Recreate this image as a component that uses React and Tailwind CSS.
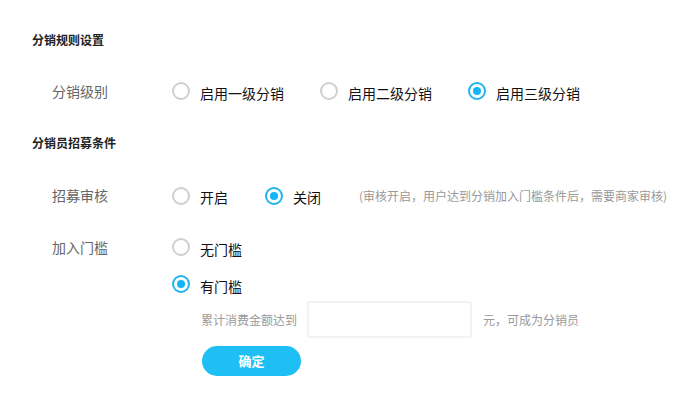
import { useState } from "react";

const levelOptions = ["启用一级分销", "启用二级分销", "启用三级分销"];

function Radio({ checked, label, onClick }) {
  return (
    <button type="button" className="flex h-[28px] items-center" onClick={onClick}>
      <span
        className={`flex h-[18px] w-[18px] items-center justify-center rounded-full border-2 ${
          checked ? "border-[#22b4f0]" : "border-[#cfcfcf]"
        }`}
      >
        {checked && <span className="h-[8px] w-[8px] rounded-full bg-[#13b5f4]" />}
      </span>
      <span className="ml-[10px] pt-[3px] text-[14px] leading-[20px] text-[#111]">{label}</span>
    </button>
  );
}

function Row({ label, children, className = "" }) {
  return (
    <div className={`flex items-start ${className}`}>
      <div className="w-[140px] shrink-0 pl-[20px] text-[14px] leading-[28px] text-[#666]">{label}</div>
      {children}
    </div>
  );
}

export default function App() {
  const [level, setLevel] = useState(2);
  const [review, setReview] = useState(false);
  const [threshold, setThreshold] = useState(true);
  const [amount, setAmount] = useState("");

  return (
    <div
      className="h-[400px] w-[696px] overflow-hidden bg-white pl-[32px]"
      style={{ fontFamily: '"Noto Sans CJK SC", "Noto Sans", sans-serif' }}
    >
      <div className="pt-[31px] text-[12px] font-bold leading-[18px] text-[#222]">分销规则设置</div>

      <Row label="分销级别" className="mt-[28px]">
        <div className="flex gap-[36px]">
          {levelOptions.map((item, index) => (
            <Radio key={item} label={item} checked={level === index} onClick={() => setLevel(index)} />
          ))}
        </div>
      </Row>

      <div className="mt-[29px] text-[12px] font-bold leading-[18px] text-[#222]">分销员招募条件</div>

      <Row label="招募审核" className="mt-[29px]">
        <div className="flex items-center">
          <Radio label="开启" checked={review} onClick={() => setReview(true)} />
          <div className="ml-[37px]">
            <Radio label="关闭" checked={!review} onClick={() => setReview(false)} />
          </div>
          <span className="ml-[38px] pt-[1px] text-[12px] leading-[28px] text-[#999]">
            (审核开启，用户达到分销加入门槛条件后，需要商家审核)
          </span>
        </div>
      </Row>

      <Row label="加入门槛" className="mt-[23px]">
        <div className="flex flex-col">
          <div className="flex flex-col gap-[9px]">
            <Radio label="无门槛" checked={!threshold} onClick={() => setThreshold(false)} />
            <Radio label="有门槛" checked={threshold} onClick={() => setThreshold(true)} />
          </div>
          <div className="ml-[29px] mt-[3px] flex items-center text-[12px] text-[#999]">
            <span>累计消费金额达到</span>
            <input
              className="ml-[10px] h-[37px] w-[165px] rounded-[3px] border-2 border-[#f2f2f2] px-2 text-[12px] text-[#333] outline-none"
              value={amount}
              onChange={(event) => setAmount(event.target.value)}
            />
            <span className="ml-[11px]">元，可成为分销员</span>
          </div>
          <button
            type="button"
            className="ml-[30px] mt-[8px] h-[30px] w-[99px] rounded-full bg-[#1ebff5] text-[13px] font-bold text-white"
          >
            确定
          </button>
        </div>
      </Row>
    </div>
  );
}
